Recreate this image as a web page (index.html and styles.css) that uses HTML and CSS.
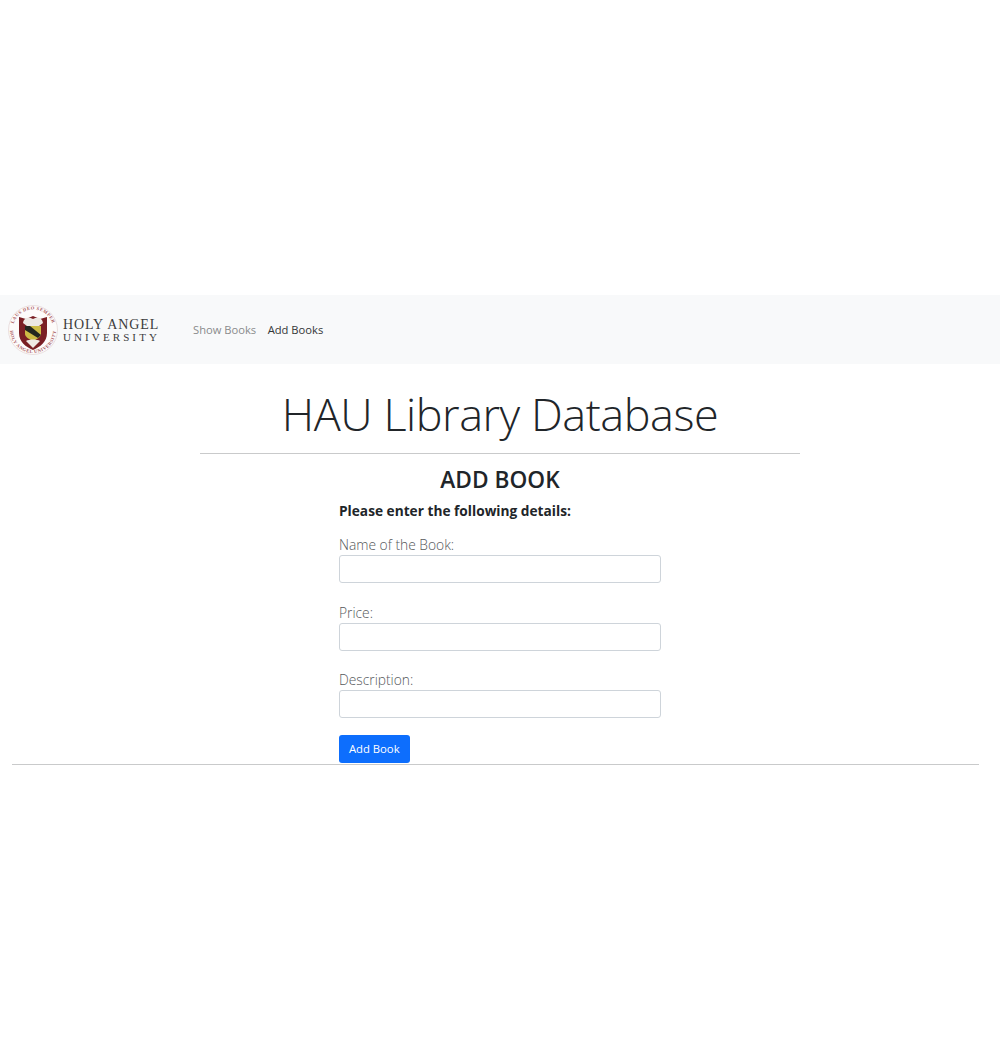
FILE: index.html
```html
<!DOCTYPE html>
<html lang="en">
<head>
    <meta charset="UTF-8">
    <meta name="viewport" content="width=device-width, initial-scale=1.0">
    <title>HAU Library Database</title>
    <link rel="stylesheet" href="styles.css">
</head>
<body>
    <nav class="navbar">
        <a class="brand" href="#">
            <svg class="seal" width="50" height="52" viewBox="0 0 50 52">
                <defs>
                    <path id="sealTop" d="M4.5 26 A20.5 20.5 0 0 1 45.5 26"/>
                    <path id="sealBottom" d="M2 26 A23 23 0 0 0 48 26"/>
                </defs>
                <circle cx="25" cy="26" r="24.5" fill="#fdfbfa" stroke="#e6d8d8" stroke-width="0.8"/>
                <text class="seal-text"><textPath href="#sealTop" startOffset="50%" text-anchor="middle">LAUS DEO SEMPER</textPath></text>
                <text class="seal-text"><textPath href="#sealBottom" startOffset="50%" text-anchor="middle">HOLY ANGEL UNIVERSITY</textPath></text>
                <path d="M11 13 L18 15 L25 12 L32 15 L39 13 V29 C39 38 32 43 25 46 C18 43 11 38 11 29 Z" fill="#7a1f24"/>
                <path d="M15 19 C16 13 21 13 25 15 C29 13 34 13 35 19 L31 22 H19 Z" fill="#ece7e2"/>
                <path d="M17 22 H33 V30 C33 33 29 35 25 37 C21 35 17 33 17 30 Z" fill="#cdbb45"/>
                <path d="M17 22 L22 22 L33 31 L30 34 L17 26 Z" fill="#23261f"/>
                <path d="M18 37 C21 35 29 35 32 37 L25 44 Z" fill="#efe9e4"/>
            </svg>
            <span class="brand-text">
                <span class="brand-top">HOLY ANGEL</span>
                <span class="brand-bottom">UNIVERSITY</span>
            </span>
        </a>
        <ul class="nav-links">
            <li><a href="#" class="nav-link">Show Books</a></li>
            <li><a href="#" class="nav-link active">Add Books</a></li>
        </ul>
    </nav>

    <h1 class="page-title">HAU Library Database</h1>
    <hr class="title-rule">

    <div class="form-wrap">
        <h2 class="form-title">ADD BOOK</h2>
        <form>
            <p class="form-intro">Please enter the following details:</p>
            <div class="form-group">
                <label for="bookName">Name of the Book:</label>
                <input type="text" id="bookName">
            </div>
            <div class="form-group">
                <label for="bookPrice">Price:</label>
                <input type="text" id="bookPrice">
            </div>
            <div class="form-group">
                <label for="bookDescription">Description:</label>
                <input type="text" id="bookDescription">
            </div>
            <button type="button" class="btn-submit">Add Book</button>
        </form>
    </div>
    <hr class="bottom-rule">
</body>
</html>
```

FILE: styles.css
```css
body {
    font-family: "Open Sans", "Noto Sans", sans-serif;
    color: #212529;
    background-color: #fff;
    margin: 0;
    padding-top: 295px;
}
.navbar {
    display: flex;
    align-items: center;
    height: 69px;
    background-color: #f8f9fa;
    padding-left: 8px;
}
.brand {
    display: flex;
    align-items: center;
    text-decoration: none;
    color: #3c3c3c;
}
.seal {
    flex: none;
}
.seal-text {
    font-family: "Liberation Serif", serif;
    font-size: 4.6px;
    font-weight: 700;
    letter-spacing: 0.5px;
    fill: #a8585c;
}
.brand-text {
    display: flex;
    flex-direction: column;
    margin: 2px 0 0 5px;
    font-family: "Liberation Serif", serif;
    line-height: 12px;
}
.brand-top {
    font-size: 14px;
    letter-spacing: 0.9px;
}
.brand-bottom {
    font-size: 11px;
    letter-spacing: 3.1px;
}
.nav-links {
    display: flex;
    list-style: none;
    margin: 0 0 4px 33px;
    padding: 0;
    gap: 11.5px;
}
.nav-link {
    font-size: 11.2px;
    color: #8a8b8c;
    text-decoration: none;
}
.nav-link.active {
    color: #343638;
}
.page-title {
    font-size: 45px;
    font-weight: 300;
    letter-spacing: -0.45px;
    line-height: 60px;
    text-align: center;
    margin: 20px 0 0;
}
.title-rule {
    width: 600px;
    margin: 9px auto 0;
    border: none;
    border-top: 1px solid #c9cacb;
}
.form-wrap {
    width: 322px;
    margin: 0 auto;
}
.form-title {
    font-size: 22.7px;
    font-weight: 600;
    line-height: 32px;
    text-align: center;
    margin: 10px 0 0;
}
.form-intro {
    font-size: 13.7px;
    font-weight: 700;
    line-height: 20px;
    margin: 5px 0 0;
}
.form-group {
    margin-top: 14px;
}
.form-group + .form-group {
    margin-top: 19.5px;
}
label {
    display: block;
    font-size: 13.8px;
    font-weight: 300;
    line-height: 20px;
    color: #55585b;
}
input[type="text"] {
    display: block;
    box-sizing: border-box;
    width: 100%;
    height: 28px;
    margin-top: 0;
    border: 1px solid #ced4da;
    border-radius: 3px;
    background-color: #fff;
}
.btn-submit {
    display: block;
    width: 70.5px;
    height: 28px;
    margin-top: 16.5px;
    padding: 0;
    font-family: inherit;
    font-size: 11.3px;
    color: #fff;
    background-color: #0d6efd;
    border: none;
    border-radius: 3px;
    cursor: pointer;
}
.bottom-rule {
    margin: 1px 21px 0 12px;
    border: none;
    border-top: 1px solid #c9cacb;
}
```
